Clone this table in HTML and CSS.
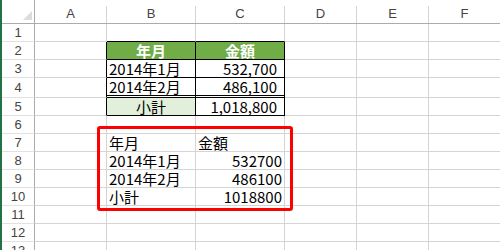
FILE: index.html
```html
<!DOCTYPE html>
<html lang="ja">
<head>
    <meta charset="UTF-8">
    <title>Book1 - Excel</title>
    <link rel="stylesheet" href="styles.css">
</head>
<body>
    <div class="window">
        <div class="edge"></div>
        <div class="sheet">
            <!-- column headers -->
            <div class="corner"><span class="tri"></span></div>
            <div class="col-head"><span>A</span></div>
            <div class="col-head"><span>B</span></div>
            <div class="col-head"><span>C</span></div>
            <div class="col-head"><span>D</span></div>
            <div class="col-head"><span>E</span></div>
            <div class="col-head"><span>F</span></div>

            <!-- row 1 -->
            <div class="row-head">1</div>
            <div class="cell"></div>
            <div class="cell line-b"></div>
            <div class="cell line-b"></div>
            <div class="cell"></div>
            <div class="cell"></div>
            <div class="cell"></div>

            <!-- row 2 -->
            <div class="row-head">2</div>
            <div class="cell line-r"></div>
            <div class="cell tbl head">年月</div>
            <div class="cell tbl head">金額</div>
            <div class="cell"></div>
            <div class="cell"></div>
            <div class="cell"></div>

            <!-- row 3 -->
            <div class="row-head">3</div>
            <div class="cell line-r"></div>
            <div class="cell tbl">2014年1月</div>
            <div class="cell tbl num fmt">532,700</div>
            <div class="cell"></div>
            <div class="cell"></div>
            <div class="cell"></div>

            <!-- row 4 -->
            <div class="row-head">4</div>
            <div class="cell line-r"></div>
            <div class="cell tbl dbl">2014年2月</div>
            <div class="cell tbl dbl num fmt">486,100</div>
            <div class="cell"></div>
            <div class="cell"></div>
            <div class="cell"></div>

            <!-- row 5 -->
            <div class="row-head">5</div>
            <div class="cell line-r"></div>
            <div class="cell tbl total">小計</div>
            <div class="cell tbl num fmt">1,018,800</div>
            <div class="cell"></div>
            <div class="cell"></div>
            <div class="cell"></div>

            <!-- row 6 -->
            <div class="row-head">6</div>
            <div class="cell"></div>
            <div class="cell"></div>
            <div class="cell"></div>
            <div class="cell"></div>
            <div class="cell"></div>
            <div class="cell"></div>

            <!-- row 7 -->
            <div class="row-head">7</div>
            <div class="cell"></div>
            <div class="cell">年月</div>
            <div class="cell">金額</div>
            <div class="cell"></div>
            <div class="cell"></div>
            <div class="cell"></div>

            <!-- row 8 -->
            <div class="row-head">8</div>
            <div class="cell"></div>
            <div class="cell">2014年1月</div>
            <div class="cell num">532700</div>
            <div class="cell"></div>
            <div class="cell"></div>
            <div class="cell"></div>

            <!-- row 9 -->
            <div class="row-head">9</div>
            <div class="cell"></div>
            <div class="cell">2014年2月</div>
            <div class="cell num">486100</div>
            <div class="cell"></div>
            <div class="cell"></div>
            <div class="cell"></div>

            <!-- row 10 -->
            <div class="row-head">10</div>
            <div class="cell"></div>
            <div class="cell">小計</div>
            <div class="cell num">1018800</div>
            <div class="cell"></div>
            <div class="cell"></div>
            <div class="cell"></div>

            <!-- rows 11-13 -->
            <div class="row-head">11</div>
            <div class="cell"></div>
            <div class="cell"></div>
            <div class="cell"></div>
            <div class="cell"></div>
            <div class="cell"></div>
            <div class="cell"></div>

            <div class="row-head">12</div>
            <div class="cell"></div>
            <div class="cell"></div>
            <div class="cell"></div>
            <div class="cell"></div>
            <div class="cell"></div>
            <div class="cell"></div>

            <div class="row-head">13</div>
            <div class="cell"></div>
            <div class="cell"></div>
            <div class="cell"></div>
            <div class="cell"></div>
            <div class="cell"></div>
            <div class="cell"></div>
        </div>

        <!-- highlight frame drawn over B7:C10 -->
        <div class="mark"></div>
    </div>
</body>
</html>
```

FILE: styles.css
```css
* {
    margin: 0;
    padding: 0;
    box-sizing: border-box;
}

body {
    background: white;
    overflow: hidden;
}

.window {
    position: relative;
    display: flex;
    width: 500px;
    height: 250px;
    overflow: hidden;
}

.edge {
    width: 2px;
    flex-shrink: 0;
    background: #217346;
}

.sheet {
    display: grid;
    grid-template-columns: 33px 72px 89px 89px 72px 72px 72px;
    grid-template-rows: 24px 18px 18px 18px 20px 18px repeat(8, 18px);
    font-family: "Noto Sans CJK JP", "Liberation Sans", sans-serif;
    font-size: 15px;
    color: #000;
}

/* headers */
.corner {
    display: flex;
    justify-content: flex-end;
    align-items: flex-end;
    padding: 0 2px 3px 0;
    border-right: 1px solid #ababab;
    border-bottom: 1px solid #ababab;
}

.tri {
    width: 0;
    height: 0;
    border-left: 9px solid transparent;
    border-bottom: 9px solid #dcdcdc;
}

.col-head {
    display: flex;
    align-items: flex-end;
    border-bottom: 1px solid #ababab;
}

.col-head span {
    flex: 1;
    height: 17px;
    line-height: 16px;
    text-align: center;
    border-right: 1px solid #d4d4d4;
    font-family: "Liberation Sans", Arial, sans-serif;
    font-size: 13px;
    color: #444;
}

.row-head {
    display: flex;
    align-items: center;
    justify-content: center;
    border-right: 1px solid #ababab;
    border-bottom: 1px solid #e1e1e1;
    font-family: "Liberation Sans", Arial, sans-serif;
    font-size: 13px;
    color: #444;
}

/* cells: text sits on the bottom of the row */
.cell {
    display: flex;
    align-items: flex-end;
    padding: 0 2px;
    line-height: 16px;
    white-space: nowrap;
    border-right: 1px solid #d4d4d4;
    border-bottom: 1px solid #d4d4d4;
}

.num {
    justify-content: flex-end;
}

.fmt {
    padding-right: 7px;
}

.line-b {
    border-bottom-color: #000;
}

.line-r {
    border-right-color: #000;
}

.tbl {
    border-right-color: #000;
    border-bottom-color: #000;
}

.tbl.head {
    justify-content: center;
    background: #70ad47;
    color: white;
    font-weight: bold;
}

.tbl.dbl {
    border-bottom: 3px double #000;
}

.tbl.total {
    justify-content: center;
    background: #e2efda;
}

.mark {
    position: absolute;
    left: 97px;
    top: 126px;
    width: 196px;
    height: 85px;
    border: 3px solid #ff0000;
    border-radius: 3px;
}
```
